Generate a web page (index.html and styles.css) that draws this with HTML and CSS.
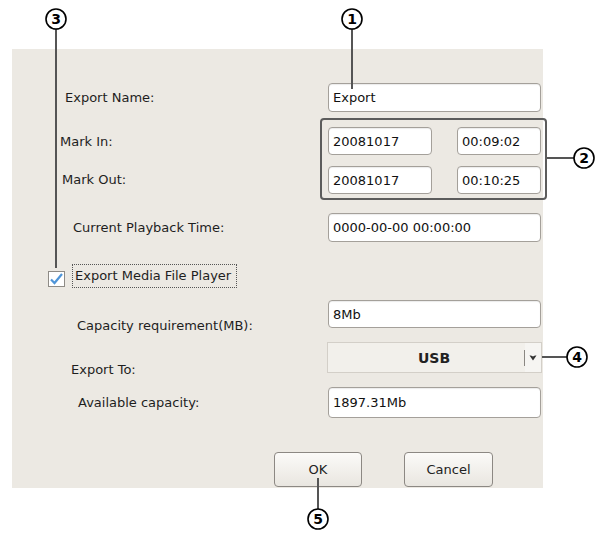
FILE: index.html
```html
<!DOCTYPE html>
<html lang="en">
  <head>
    <meta charset="UTF-8" />
    <meta name="viewport" content="width=device-width, initial-scale=1.0" />
    <title>Export</title>
    <link rel="stylesheet" href="styles.css">
  </head>
  <body>
    <div class="page">
      <div class="panel">
        <div class="row row-name">
          <label class="label ind-name" for="export_name">Export Name:</label>
          <input class="field" type="text" id="export_name" value="Export" />
        </div>

        <div class="row row-mark">
          <div class="mark-labels">
            <label class="label ind-in" for="mark_in_date">Mark In:</label>
            <label class="label ind-out" for="mark_out_date">Mark Out:</label>
          </div>
          <div class="mark-box">
            <input class="field" type="text" id="mark_in_date" value="20081017" />
            <input class="field" type="text" id="mark_in_time" value="00:09:02" />
            <input class="field" type="text" id="mark_out_date" value="20081017" />
            <input class="field" type="text" id="mark_out_time" value="00:10:25" />
          </div>
        </div>

        <div class="row row-current">
          <label class="label ind-current" for="playback">Current Playback Time:</label>
          <input class="field" type="text" id="playback" value="0000-00-00 00:00:00" />
        </div>

        <div class="row row-check">
          <span class="checkbox">
            <svg width="15" height="14" viewBox="0 0 15 14">
              <path d="M2 7.5 L5.5 11 L13 2" fill="none" stroke="#4f95d8" stroke-width="2.2" />
            </svg>
          </span>
          <span class="check-text">Export Media File Player</span>
        </div>

        <div class="row row-capacity">
          <label class="label ind-capacity label-drop" for="capacity">Capacity requirement(MB):</label>
          <input class="field" type="text" id="capacity" value="8Mb" />
        </div>

        <div class="row row-target">
          <label class="label ind-target label-drop">Export To:</label>
          <div class="combo">
            <span class="combo-text">USB</span>
            <span class="combo-sep"></span>
            <span class="combo-arrow">
              <svg width="8" height="6" viewBox="0 0 8 6">
                <path d="M0.5 0.5 Q2 0 4 1.5 Q6 0 7.5 0.5 L4 5.5 Z" fill="#333" />
              </svg>
            </span>
          </div>
        </div>

        <div class="row row-available">
          <label class="label ind-available" for="available">Available capacity:</label>
          <input class="field" type="text" id="available" value="1897.31Mb" />
        </div>

        <div class="row row-buttons">
          <button type="button" class="btn btn-ok">OK</button>
          <button type="button" class="btn btn-cancel">Cancel</button>
        </div>
      </div>

      <!-- callout numbers over the dialog -->
      <svg class="callouts" width="600" height="534" viewBox="0 0 600 534">
        <g stroke="#555" stroke-width="2">
          <line x1="352" y1="29" x2="352" y2="89" />
          <line x1="56" y1="29" x2="56" y2="268" />
          <line x1="547" y1="158" x2="574" y2="158" />
          <line x1="542" y1="357" x2="567" y2="357" />
          <line x1="318" y1="478" x2="318" y2="509" />
        </g>
        <g fill="#fff" stroke="#000" stroke-width="1.6">
          <circle cx="352" cy="19" r="10" />
          <circle cx="56" cy="19" r="10" />
          <circle cx="584" cy="158" r="10" />
          <circle cx="577" cy="357" r="10" />
          <circle cx="318" cy="519" r="10" />
        </g>
        <g class="callout-num" text-anchor="middle">
          <text x="352" y="24">1</text>
          <text x="56" y="24">3</text>
          <text x="584" y="163">2</text>
          <text x="577" y="362">4</text>
          <text x="318" y="524">5</text>
        </g>
      </svg>
    </div>
  </body>
</html>
```

FILE: styles.css
```css
body {
  margin: 0;
  background-color: #ffffff;
  font-family: "DejaVu Sans", sans-serif;
}

.page {
  position: relative;
  width: 600px;
  height: 534px;
  padding: 49px 0 0 12px;
  box-sizing: border-box;
}

.panel {
  width: 531px;
  background-color: #ece9e3;
  padding: 34px 0 1px 0;
  display: flex;
  flex-direction: column;
}

.row {
  display: flex;
  align-items: center;
}

.label {
  flex: 0 0 auto;
  width: 316px;
  box-sizing: border-box;
  font-size: 13px;
  line-height: 16px;
  color: #1e1e1e;
}

/* label sits lower than its field */
.label-drop {
  margin-top: 12px;
  margin-bottom: -12px;
}

.ind-name { padding-left: 53px; }
.ind-in { padding-left: 48px; }
.ind-out { padding-left: 50px; }
.ind-current { padding-left: 61px; }
.ind-capacity { padding-left: 65px; }
.ind-target { padding-left: 59px; }
.ind-available { padding-left: 66px; }

.field {
  flex: 0 0 auto;
  width: 213px;
  height: 29px;
  box-sizing: border-box;
  border: 1px solid #a4a09a;
  border-radius: 4px;
  background-color: #ffffff;
  box-shadow: inset 0 1px 1px rgba(0, 0, 0, 0.08);
  padding: 0 4px;
  margin: 0;
  font-family: "DejaVu Sans", sans-serif;
  font-size: 13px;
  color: #111111;
  outline: none;
}

.row-mark {
  margin-top: 6px;
  align-items: flex-start;
}

.mark-labels {
  flex: 0 0 auto;
  width: 308px;
  display: flex;
  flex-direction: column;
  padding-top: 16px;
  gap: 22px;
}

.mark-labels .label {
  width: auto;
}

.mark-box {
  flex: 0 0 auto;
  width: 227px;
  box-sizing: border-box;
  border: 2px solid #5c5c5c;
  border-radius: 4px;
  padding: 7px 4px 4px 6px;
  display: grid;
  grid-template-columns: 104px 84px;
  column-gap: 25px;
  row-gap: 11px;
}

.mark-box .field {
  width: 100%;
  height: 28px;
}

.row-current {
  margin-top: 13px;
}

.row-check {
  margin-top: 22px;
  height: 24px;
  padding-left: 36px;
}

.checkbox {
  width: 17px;
  height: 16px;
  margin-top: 6px;
  box-sizing: border-box;
  border: 1px solid #8e8b86;
  background-color: #ffffff;
  display: flex;
  align-items: center;
  justify-content: center;
}

.check-text {
  margin-left: 7px;
  height: 24px;
  box-sizing: border-box;
  border: 1px dotted #555555;
  padding: 0 5px 0 2px;
  font-size: 13px;
  line-height: 22px;
  color: #1e1e1e;
}

.row-capacity {
  margin-top: 12px;
}

.row-capacity .field {
  height: 28px;
}

.row-target {
  margin-top: 14px;
}

.combo {
  flex: 0 0 auto;
  width: 215px;
  height: 31px;
  margin-left: -1px;
  box-sizing: border-box;
  border: 1px solid #d3cfc8;
  background-color: #f2f0eb;
  display: flex;
  align-items: center;
}

.combo-text {
  flex: 1;
  text-align: center;
  padding-left: 16px;
  font-size: 14px;
  font-weight: bold;
  color: #222222;
}

.combo-sep {
  width: 1px;
  height: 16px;
  background-color: #8a8782;
}

.combo-arrow {
  width: 16px;
  height: 29px;
  background-color: #f6f5f2;
  display: flex;
  align-items: center;
  justify-content: center;
}

.row-available {
  margin-top: 14px;
}

.row-available .field {
  height: 31px;
}

.row-buttons {
  margin-top: 34px;
  padding-left: 262px;
  gap: 42px;
}

.btn {
  height: 35px;
  box-sizing: border-box;
  border: 1px solid #8c8883;
  border-radius: 4px;
  background: linear-gradient(#fbfaf8, #e9e6e0);
  font-family: "DejaVu Sans", sans-serif;
  font-size: 13px;
  color: #222222;
  padding: 0;
  cursor: pointer;
}

.btn-ok {
  width: 88px;
}

.btn-cancel {
  width: 89px;
}

.callouts {
  position: absolute;
  top: 0;
  left: 0;
  pointer-events: none;
}

.callout-num {
  font-family: "DejaVu Sans", sans-serif;
  font-size: 14px;
  font-weight: bold;
  fill: #000000;
}
```
